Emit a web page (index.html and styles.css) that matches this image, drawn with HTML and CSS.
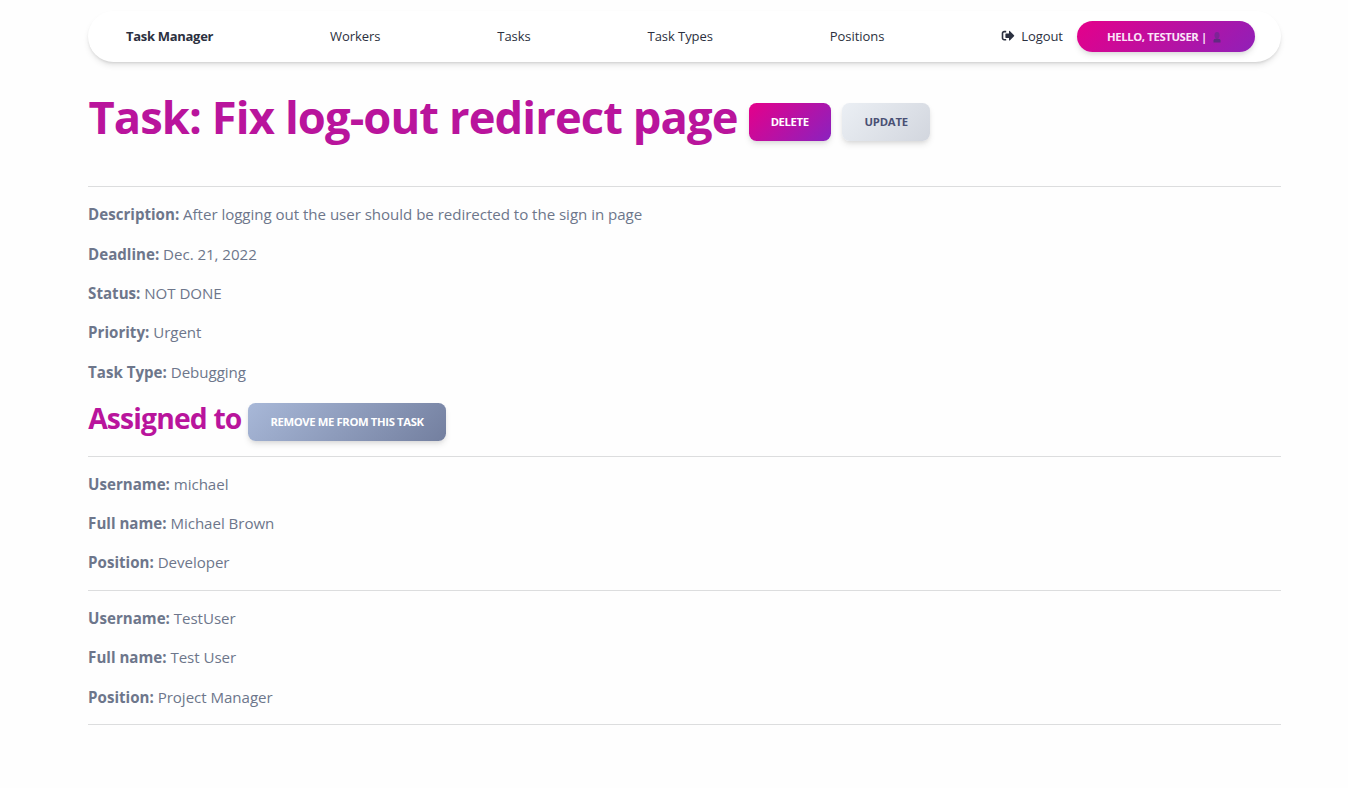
FILE: index.html
```html
<!DOCTYPE html>
<html lang="en">
<head>
<meta charset="utf-8">
<title>Task Manager</title>
<link rel="stylesheet" href="styles.css">
</head>
<body>
<div class="container">
  <nav class="navbar">
    <a class="brand">Task Manager</a>
    <a>Workers</a>
    <a>Tasks</a>
    <a>Task Types</a>
    <a>Positions</a>
    <div class="account">
      <a class="logout"><svg class="logout-icon" viewBox="0 0 14 12"><path d="M5.2 1.6H3.2a1.7 1.7 0 0 0-1.7 1.7v4.8a1.7 1.7 0 0 0 1.7 1.7h2" fill="none" stroke="currentColor" stroke-width="1.6"/><path d="M4.4 4.1q0-.6.6-.6h3V1.4q0-.9.8-.4l4.2 4.2q.5.5 0 1L8.800 10.400q-.8.500-.8-.4V7.900H5q-.6 0-.6-.6z" fill="currentColor"/></svg>Logout</a>
      <a class="btn user-btn">Hello, TestUser |<svg class="user-icon" viewBox="0 0 8 11"><ellipse cx="4" cy="3.200" rx="2.500" ry="3.200" fill="#7d2496"/><path d="M.5 10.500V8.500Q.5 6.500 4 6.500t3.500 2v2z" fill="#602b80"/></svg></a>
    </div>
  </nav>
  <header class="title-row">
    <h1>Task: Fix log-out redirect page</h1>
    <a class="btn primary">Delete</a>
    <a class="btn light">Update</a>
  </header>
  <section class="details">
    <p><b>Description:</b> After logging out the user should be redirected to the sign in page</p>
    <p><b>Deadline:</b> Dec. 21, 2022</p>
    <p><b>Status:</b> NOT DONE</p>
    <p><b>Priority:</b> Urgent</p>
    <p><b>Task Type:</b> Debugging</p>
  </section>
  <header class="assigned-row">
    <h2>Assigned to</h2>
    <a class="btn secondary">Remove me from this task</a>
  </header>
  <section class="worker">
    <p><b>Username:</b> michael</p>
    <p><b>Full name:</b> Michael Brown</p>
    <p><b>Position:</b> Developer</p>
  </section>
  <section class="worker last">
    <p><b>Username:</b> TestUser</p>
    <p><b>Full name:</b> Test User</p>
    <p><b>Position:</b> Project Manager</p>
  </section>
</div>
</body>
</html>
```
FILE: styles.css
```css
* { box-sizing: border-box; }
body {
  margin: 0;
  background: #fefefe;
  color: #6d768b;
  font: 400 15.1px/24.2px "Open Sans", sans-serif;
}
.container { width: 1193px; margin-left: 88px; padding-top: 11px; }
.navbar {
  height: 51px;
  padding: 0 26px 0 38px;
  display: flex;
  align-items: center;
  justify-content: space-between;
  border-radius: 26px;
  background: #fff;
  box-shadow: 0 2px 3px -1px rgba(20, 20, 20, .13), 0 4px 6px -1px rgba(20, 20, 20, .1);
  color: #2b3040;
  font-size: 13px;
  letter-spacing: -.06px;
}
.brand { font-weight: 700; letter-spacing: -.3px; }
.account, .logout { display: flex; align-items: center; }
.logout-icon { width: 14px; height: 12px; margin-right: 6px; }
.btn {
  display: flex;
  align-items: center;
  justify-content: center;
  height: 38px;
  border-radius: 7.5px;
  color: #fff;
  font-size: 11.3px;
  font-weight: 700;
  letter-spacing: -.38px;
  text-transform: uppercase;
  white-space: nowrap;
  box-shadow: 0 4px 7px -1px rgba(0, 0, 0, .11), 0 2px 4px -1px rgba(0, 0, 0, .07);
}
.user-btn {
  width: 178px;
  height: 31px;
  margin-left: 14px;
  padding: 2px 4px 0 0;
  border-radius: 16px;
  background: linear-gradient(135deg, #e5008a, #9020b8);
  color: #fbe5f8;
}
.user-icon { width: 8px; height: 11px; margin-left: 6px; }
.title-row {
  height: 125px;
  padding-top: 41px;
  display: flex;
  align-items: flex-start;
  border-bottom: 1px solid #dcddde;
}
h1, h2 {
  margin: 0;
  font-weight: 700;
  color: #b9149c;
}
h1 { margin: -14px 11.100px 0 .4px; font-size: 45.3px; line-height: 56px; letter-spacing: -.9px; }
.primary { width: 82px; margin-right: 11px; background: linear-gradient(135deg, #e5008a, #8a22bf); }
.light { width: 88px; padding-left: 1px; background: linear-gradient(135deg, #ebeff4, #d2d6de); color: #4a5074; letter-spacing: -.2px; }
p { margin: 0 0 15.1px .1px; letter-spacing: -.04px; }
b { letter-spacing: 0; }
.details { height: 212px; padding-top: 15.400px; }
.assigned-row {
  height: 58px;
  padding-top: 4px;
  display: flex;
  align-items: flex-start;
  border-bottom: 1px solid #dcddde;
}
.details + .assigned-row { margin-top: 0; }
h2 { margin: -4px 6.500px 0 .2px; font-size: 28.3px; line-height: 38px; letter-spacing: -.85px; }
.secondary { width: 198px; background: linear-gradient(135deg, #a8b8d8, #737f9f); }
.worker { height: 134px; padding-top: 14.850px; border-bottom: 1px solid #dcddde; }
.last { padding-top: 15.100px; }
```
